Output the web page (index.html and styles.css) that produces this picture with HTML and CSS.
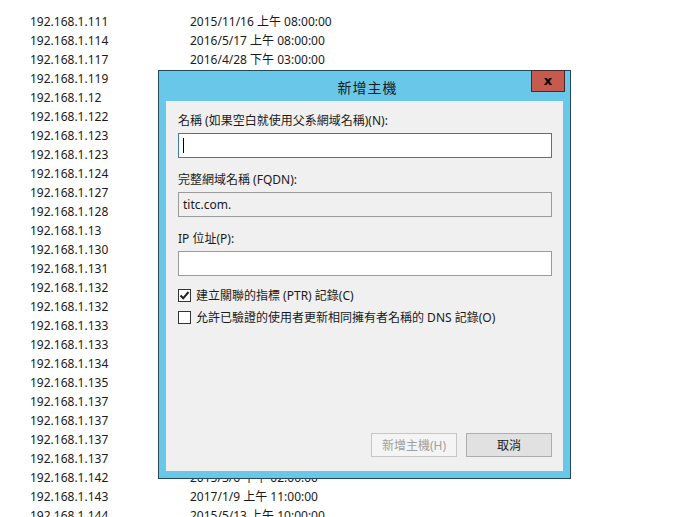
FILE: index.html
```html
<!DOCTYPE html>
<html lang="zh-Hant">
<head>
    <meta charset="UTF-8">
    <title>新增主機</title>
    <link rel="stylesheet" href="styles.css">
</head>
<body>
    <div class="records">
        <div class="row"><span class="ip">192.168.1.111</span><span class="stamp">2015/11/16 上午 08:00:00</span></div>
        <div class="row"><span class="ip">192.168.1.114</span><span class="stamp">2016/5/17 上午 08:00:00</span></div>
        <div class="row"><span class="ip">192.168.1.117</span><span class="stamp">2016/4/28 下午 03:00:00</span></div>
        <div class="row"><span class="ip">192.168.1.119</span></div>
        <div class="row"><span class="ip">192.168.1.12</span></div>
        <div class="row"><span class="ip">192.168.1.122</span></div>
        <div class="row"><span class="ip">192.168.1.123</span></div>
        <div class="row"><span class="ip">192.168.1.123</span></div>
        <div class="row"><span class="ip">192.168.1.124</span></div>
        <div class="row"><span class="ip">192.168.1.127</span></div>
        <div class="row"><span class="ip">192.168.1.128</span></div>
        <div class="row"><span class="ip">192.168.1.13</span></div>
        <div class="row"><span class="ip">192.168.1.130</span></div>
        <div class="row"><span class="ip">192.168.1.131</span></div>
        <div class="row"><span class="ip">192.168.1.132</span></div>
        <div class="row"><span class="ip">192.168.1.132</span></div>
        <div class="row"><span class="ip">192.168.1.133</span></div>
        <div class="row"><span class="ip">192.168.1.133</span></div>
        <div class="row"><span class="ip">192.168.1.134</span></div>
        <div class="row"><span class="ip">192.168.1.135</span></div>
        <div class="row"><span class="ip">192.168.1.137</span></div>
        <div class="row"><span class="ip">192.168.1.137</span></div>
        <div class="row"><span class="ip">192.168.1.137</span></div>
        <div class="row"><span class="ip">192.168.1.137</span></div>
        <div class="row"><span class="ip">192.168.1.142</span><span class="stamp">2015/3/6 下午 02:00:00</span></div>
        <div class="row"><span class="ip">192.168.1.143</span><span class="stamp">2017/1/9 上午 11:00:00</span></div>
        <div class="row"><span class="ip">192.168.1.144</span><span class="stamp">2015/5/13 上午 10:00:00</span></div>
    </div>

    <div class="dialog">
        <div class="titlebar">
            <span class="title">新增主機</span>
            <button class="close">x</button>
        </div>
        <div class="panel">
            <label class="field-label">名稱 (如果空白就使用父系網域名稱)(N):</label>
            <div class="textbox focused"><span class="caret"></span></div>

            <label class="field-label">完整網域名稱 (FQDN):</label>
            <div class="textbox readonly">titc.com.</div>

            <label class="field-label">IP 位址(P):</label>
            <div class="textbox"></div>

            <div class="check-row first">
                <span class="box">
                    <svg width="11" height="11" viewBox="0 0 11 11"><polyline points="1.5,5.5 4.2,8.3 9.5,2" fill="none" stroke="#222" stroke-width="2"/></svg>
                </span>
                <span>建立關聯的指標 (PTR) 記錄(C)</span>
            </div>
            <div class="check-row">
                <span class="box"></span>
                <span>允許已驗證的使用者更新相同擁有者名稱的 DNS 記錄(O)</span>
            </div>

            <div class="buttons">
                <button class="btn disabled">新增主機(H)</button>
                <button class="btn">取消</button>
            </div>
        </div>
    </div>
</body>
</html>
```

FILE: styles.css
```css
body {
    margin: 0;
    background: #ffffff;
    font-family: "Noto Sans", "Noto Sans CJK TC", sans-serif;
    font-size: 12px;
    color: #1a1a1a;
}

.records {
    padding: 12px 0 0 30px;
}
.row {
    display: flex;
    height: 19px;
    line-height: 19px;
    white-space: nowrap;
}
.ip {
    width: 160px;
}

.dialog {
    position: absolute;
    left: 158px;
    top: 70px;
    width: 411px;
    height: 407px;
    border: 1px solid #24495c;
    background: #69c8e9;
    display: flex;
    flex-direction: column;
}
.titlebar {
    height: 30px;
    display: flex;
    align-items: center;
    justify-content: center;
}
.title {
    font-family: "Noto Sans CJK TC", sans-serif;
    font-size: 14px;
    letter-spacing: 1px;
    color: #1a1a1a;
    margin-left: 6px;
    margin-top: 1px;
}
.close {
    position: absolute;
    top: -1px;
    right: 5px;
    width: 34px;
    height: 22px;
    padding: 0;
    border: 1px solid #4a2a28;
    background: #c65a4e;
    color: #000;
    font-family: "DejaVu Sans", sans-serif;
    font-weight: bold;
    font-size: 13px;
    line-height: 16px;
}

.panel {
    flex: 1;
    margin: 0 7px 7px 7px;
    background: #f0f0f0;
    padding: 12px 11px 14px 12px;
    display: flex;
    flex-direction: column;
}
.field-label {
    line-height: 16px;
    margin-bottom: 4px;
}
.textbox {
    height: 23px;
    border: 1px solid #9a9a9a;
    background: #ffffff;
    margin-bottom: 14px;
    padding-left: 4px;
    line-height: 23px;
    display: flex;
    align-items: center;
}
.textbox.focused {
    border-color: #3f79a8;
}
.textbox.readonly {
    background: #f0f0f0;
}
.caret {
    width: 1px;
    height: 15px;
    background: #000;
}

.check-row {
    display: flex;
    align-items: center;
    gap: 5px;
    height: 22px;
}
.check-row.first {
    margin-top: -6px;
}
.box {
    width: 11px;
    height: 11px;
    border: 1px solid #333;
    background: #fff;
    display: flex;
    align-items: center;
    justify-content: center;
}

.buttons {
    margin-top: auto;
    display: flex;
    justify-content: flex-end;
    gap: 9px;
}
.btn {
    width: 86px;
    height: 24px;
    border: 1px solid #adadad;
    background: #e1e1e1;
    font-family: "Noto Sans", "Noto Sans CJK TC", sans-serif;
    font-size: 12px;
    color: #1a1a1a;
    padding: 0;
}
.btn.disabled {
    background: #f4f4f4;
    border-color: #c6c6c6;
    color: #a0a0a0;
}
```
